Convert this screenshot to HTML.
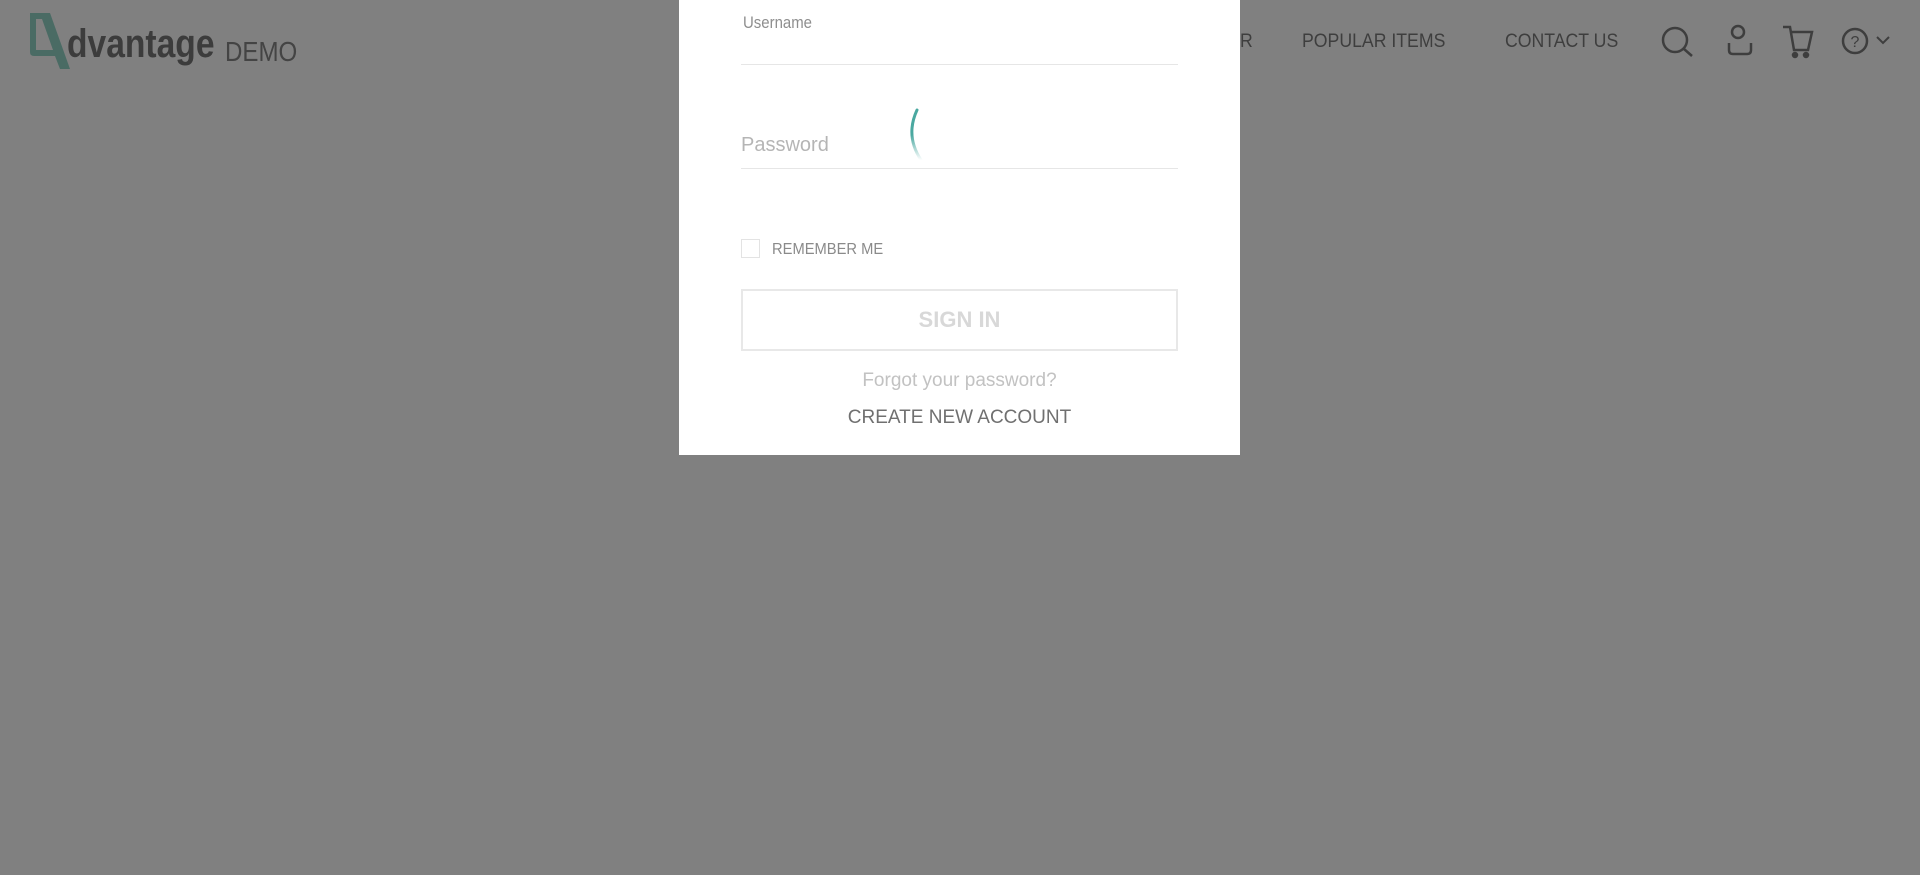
<!DOCTYPE html>
<html><head><meta charset="utf-8"><style>
html,body{margin:0;padding:0;width:1920px;height:875px;overflow:hidden;background:#808080;font-family:"Liberation Sans",sans-serif;}
.abs{position:absolute;white-space:nowrap;}
.nav{color:#3e3e3e;font-size:19px;top:31px;transform:scaleX(0.93);transform-origin:left;}
.modal{position:absolute;left:679px;top:0;width:561px;height:455px;background:#fff;}
</style></head><body>
<svg class="abs" style="left:0;top:0" width="80" height="80" viewBox="0 0 80 80"><path d="M30 13 H50 L70 69 H60 L55 56 H34 Q30 56 30 52 Z M36 19 V50 H53 L42 19 Z" fill="#4a6b64" fill-rule="evenodd"/></svg>
<div class="abs" style="left:67px;top:22px;font-size:40px;font-weight:bold;color:#3c3c3c;transform:scaleX(0.84);transform-origin:left;">dvantage</div>
<div class="abs" style="left:225px;top:36px;font-size:28px;color:#444;transform:scaleX(0.86);transform-origin:left;">DEMO</div>
<div class="abs nav" style="left:1240px">R</div>
<div class="abs nav" style="left:1302px">POPULAR ITEMS</div>
<div class="abs nav" style="left:1505px">CONTACT US</div>
<svg class="abs" style="left:1640px;top:15px" width="260" height="60" viewBox="0 0 260 60" fill="none" stroke="#3e3e3e" stroke-width="2.5">
<circle cx="35" cy="25" r="12"/><path d="M44 34 L52 41"/>
<circle cx="98" cy="17" r="6"/><path d="M89 28 V35 Q89 39 93 39 H107 Q111 39 111 35 V28"/>
<path d="M143 12 H150 L154 35 H168 L172 17 H151"/><circle cx="155" cy="40" r="2" fill="#3e3e3e"/><circle cx="166" cy="40" r="2" fill="#3e3e3e"/>
<circle cx="215" cy="26" r="12"/><path d="M237 22 L243 28 L249 22" stroke-width="2"/>
<text x="215" y="32" font-size="16" text-anchor="middle" fill="#3e3e3e" stroke="none" font-family="Liberation Sans">?</text>
</svg>
<div class="modal">
<div class="abs" style="left:64px;top:13px;font-size:17px;color:#8e8e8e;transform:scaleX(0.88);transform-origin:left">Username</div>
<div class="abs" style="left:62px;top:64px;width:437px;height:1px;background:#e6e6e6"></div>
<div class="abs" style="left:62px;top:134px;font-size:20px;color:#b5b5b5">Password</div>
<div class="abs" style="left:62px;top:168px;width:437px;height:1px;background:#e6e6e6"></div>
<svg class="abs" style="left:228px;top:106px" width="40" height="60" viewBox="0 0 40 60"><defs><linearGradient id="g" x1="0" y1="0" x2="0" y2="1"><stop offset="0.5" stop-color="#4aa8a0"/><stop offset="1" stop-color="#4aa8a0" stop-opacity="0"/></linearGradient></defs><path d="M10 4 Q-2 30 14 54" fill="none" stroke="url(#g)" stroke-width="3" stroke-linecap="round"/></svg>
<div class="abs" style="left:62px;top:239px;width:17px;height:17px;border:1px solid #e3e3e3"></div>
<div class="abs" style="left:93px;top:241px;font-size:16px;color:#8a8a8a;transform:scaleX(0.92);transform-origin:left">REMEMBER ME</div>
<div class="abs" style="left:62px;top:289px;width:433px;height:58px;border:2px solid #e8e8e8;text-align:center;line-height:58px;font-size:22px;font-weight:bold;color:#d8d8d8">SIGN IN</div>
<div class="abs" style="left:0;width:561px;text-align:center;top:370px;font-size:19px;color:#c2c2c2">Forgot your password?</div>
<div class="abs" style="left:0;width:561px;text-align:center;top:407px;font-size:19px;color:#707070">CREATE NEW ACCOUNT</div>
</div>
</body></html>
